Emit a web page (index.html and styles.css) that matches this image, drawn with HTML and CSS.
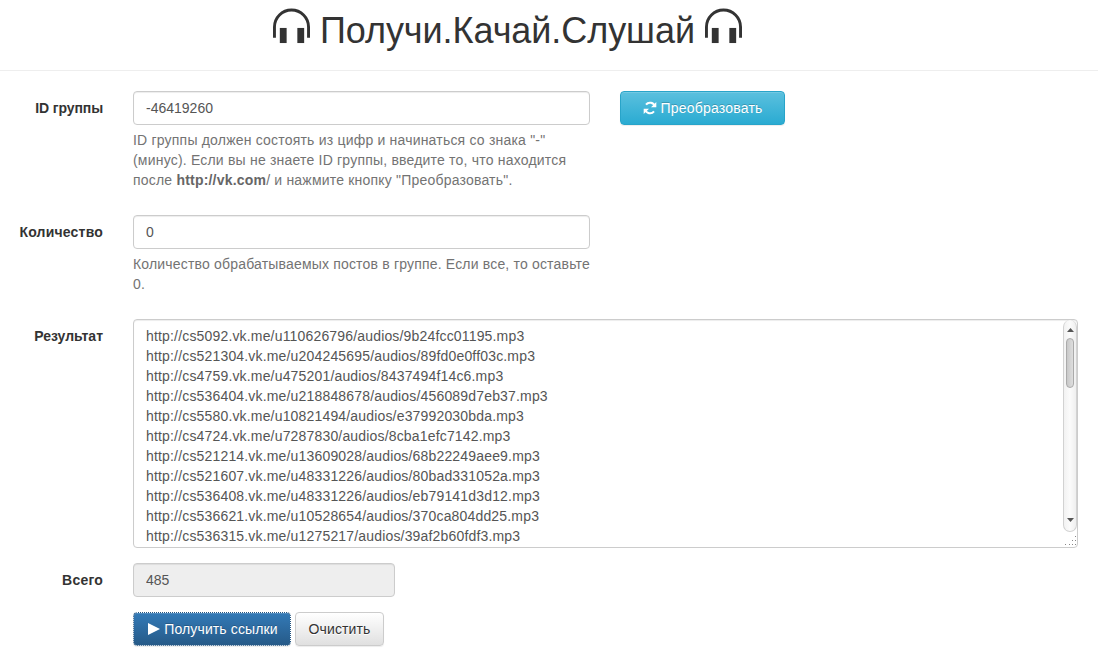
FILE: index.html
```html
<!DOCTYPE html>
<html lang="ru">
<head>
<meta charset="utf-8">
<title>Получи.Качай.Слушай</title>
<link rel="stylesheet" href="styles.css">
</head>
<body>
<header class="page-header">
  <h1 class="title">
    <svg class="phones" viewBox="0 0 38 36"><path d="M1.500 30V19a17.500 17.500 0 0 1 35 0v11" fill="none" stroke="currentColor" stroke-width="3"/><rect x="7" y="20" width="7" height="15.500" fill="currentColor"/><rect x="25" y="20" width="7" height="15.500" fill="currentColor"/></svg>
    <span>Получи.Качай.Слушай</span>
    <svg class="phones" viewBox="0 0 38 36"><path d="M1.500 30V19a17.500 17.500 0 0 1 35 0v11" fill="none" stroke="currentColor" stroke-width="3"/><rect x="7" y="20" width="7" height="15.500" fill="currentColor"/><rect x="25" y="20" width="7" height="15.500" fill="currentColor"/></svg>
  </h1>
</header>
<form class="form">
  <div class="group">
    <label class="label label-tight" for="gid">ID группы</label>
    <div class="control">
      <input class="input" id="gid" type="text" value="-46419260">
      <p class="help help-id">ID группы должен состоять из цифр и начинаться со знака "-" (минус). Если вы не знаете ID группы, введите то, что находится после <b>http://vk.com</b>/ и нажмите кнопку "Преобразовать".</p>
    </div>
    <button class="btn btn-info" type="button">
      <svg class="ico" viewBox="0 0 14 14"><path d="M11.800 5.600A5 5 0 0 0 3 3.600" fill="none" stroke="currentColor" stroke-width="2"/><path d="M13.300 1v5.300H8z" fill="currentColor"/><path d="M2.200 8.400A5 5 0 0 0 11 10.400" fill="none" stroke="currentColor" stroke-width="2"/><path d="M.7 13V7.700H6z" fill="currentColor"/></svg>
      Преобразовать
    </button>
  </div>
  <div class="group">
    <label class="label label-wide" for="cnt">Количество</label>
    <div class="control">
      <input class="input" id="cnt" type="text" value="0">
      <p class="help help-count">Количество обрабатываемых постов в группе. Если все, то оставьте 0.</p>
    </div>
  </div>
  <div class="group">
    <label class="label" for="res">Результат</label>
    <div class="result-wrap">
      <textarea class="result" id="res" spellcheck="false">http://cs5092.vk.me/u110626796/audios/9b24fcc01195.mp3
http://cs521304.vk.me/u204245695/audios/89fd0e0ff03c.mp3
http://cs4759.vk.me/u475201/audios/8437494f14c6.mp3
http://cs536404.vk.me/u218848678/audios/456089d7eb37.mp3
http://cs5580.vk.me/u10821494/audios/e37992030bda.mp3
http://cs4724.vk.me/u7287830/audios/8cba1efc7142.mp3
http://cs521214.vk.me/u13609028/audios/68b22249aee9.mp3
http://cs521607.vk.me/u48331226/audios/80bad331052a.mp3
http://cs536408.vk.me/u48331226/audios/eb79141d3d12.mp3
http://cs536621.vk.me/u10528654/audios/370ca804dd25.mp3
http://cs536315.vk.me/u1275217/audios/39af2b60fdf3.mp3</textarea>
      <div class="scrollbar">
        <svg class="arrow" viewBox="0 0 7 4"><path d="M3.500 0L7 4H0z"/></svg>
        <div class="thumb"></div>
        <svg class="arrow arrow-down" viewBox="0 0 7 4"><path d="M0 0h7L3.500 4z"/></svg>
      </div>
      <svg class="grip" viewBox="0 0 12 10"><g fill="#888"><rect x="10" width="1" height="1"/><rect x="7" y="4" width="1" height="1"/><rect x="10" y="4" width="1" height="1"/><rect y="8" width="1" height="1"/><rect x="4" y="8" width="1" height="1"/><rect x="7" y="8" width="1" height="1"/><rect x="10" y="8" width="1" height="1"/></g></svg>
    </div>
  </div>
  <div class="group">
    <label class="label label-wide" for="total">Всего</label>
    <input class="input input-total" id="total" type="text" value="485" disabled>
  </div>
  <div class="actions">
    <button class="btn btn-primary" type="button">
      <svg class="ico" viewBox="0 0 14 14"><path d="M2 1l12 6-12 6z" fill="currentColor"/></svg>
      Получить ссылки
    </button>
    <button class="btn btn-default" type="button">Очистить</button>
  </div>
</form>
</body>
</html>
```
FILE: styles.css
```css
* { box-sizing: border-box; }
html, body { height: 100%; }
body {
  margin: 0;
  overflow: hidden;
  background: #fff;
  color: #333;
  font: 14px/20px "Liberation Sans", Arial, sans-serif;
}
.page-header {
  height: 71px;
  margin-bottom: 20px;
  border-bottom: 1px solid #eee;
  padding-left: 273px;
}
.title {
  display: flex;
  align-items: flex-start;
  gap: 10px;
  margin: 0;
  padding-top: 11px;
  font-size: 36px;
  font-weight: 500;
  line-height: 40px;
  letter-spacing: -.06px;
  color: #333;
}
.phones { width: 37px; height: 36px; flex: none; margin-top: -3px; }
.form { padding-right: 20px; }
.group { display: flex; align-items: flex-start; gap: 30px; margin-bottom: 15px; }
.label {
  width: 103px;
  flex: none;
  padding-top: 7px;
  text-align: right;
  font-weight: 700;
}
.label-wide { letter-spacing: .2px; }
.label-tight { letter-spacing: -.1px; }
.control { width: 457px; flex: none; }
.input {
  display: block;
  width: 100%;
  height: 34px;
  padding: 6px 12px;
  border: 1px solid #ccc;
  border-radius: 4px;
  background: #fff;
  box-shadow: inset 0 1px 1px rgba(0,0,0,.075);
  color: #555;
  font: inherit;
}
.input-total { width: 262px; background: #eee; opacity: 1; }
.help { margin: 5px 0 10px; color: #737373; }
.help b { color: #666; }
.help-id { letter-spacing: .2px; }
.help-count { letter-spacing: .18px; }
.result-wrap { position: relative; flex: 1; }
.result {
  display: block;
  width: 100%;
  height: 229px;
  padding: 6px 12px;
  border: 1px solid #ccc;
  border-radius: 4px;
  box-shadow: inset 0 1px 1px rgba(0,0,0,.075);
  color: #555;
  font: inherit;
  letter-spacing: .17px;
  white-space: pre;
  overflow: hidden;
  resize: none;
}
.scrollbar {
  position: absolute;
  top: 1px;
  right: 1px;
  width: 14px;
  height: 212px;
  display: flex;
  flex-direction: column;
  align-items: center;
  padding-top: 8px;
  border: 1px solid #d2d2d2;
  border-width: 0 1px 1px;
  border-radius: 7px;
  background: linear-gradient(90deg, #f2f2f2, #fbfbfb 50%, #efefef);
}
.arrow { width: 7px; height: 4px; flex: none; fill: #555; }
.arrow-down { margin-top: auto; margin-bottom: 9px; }
.thumb {
  width: 8px;
  height: 50px;
  margin-top: 6px;
  border: 1px solid #aaa;
  border-radius: 4px;
  background: linear-gradient(90deg, #c8c8c8, #dedede);
}
.grip {
  position: absolute;
  right: 1px;
  bottom: 2px;
  width: 12px;
  height: 10px;
}
.actions { display: flex; gap: 4px; padding-left: 133px; }
.btn {
  display: inline-flex;
  align-items: center;
  justify-content: center;
  gap: 4px;
  height: 34px;
  padding: 6px 12px;
  border: 1px solid transparent;
  border-radius: 4px;
  font: inherit;
  white-space: nowrap;
  letter-spacing: .12px;
  box-shadow: inset 0 1px 0 rgba(255,255,255,.15), 0 1px 1px rgba(0,0,0,.075);
}
.ico { width: 14px; height: 14px; flex: none; }
.btn-info {
  width: 165px;
  letter-spacing: .2px;
  color: #fff;
  text-shadow: 0 -1px 0 rgba(0,0,0,.2);
  background: linear-gradient(#5bc0de, #2aabd2);
  border-color: #28a4c9;
}
.btn-primary {
  width: 158px;
  color: #fff;
  text-shadow: 0 -1px 0 rgba(0,0,0,.2);
  background: linear-gradient(#337ab7, #265a88);
  border-color: #245580;
  outline: 1px dotted #fff;
  outline-offset: -1px;
}
.btn-default {
  width: 89px;
  color: #333;
  text-shadow: 0 1px 0 #fff;
  background: linear-gradient(#fff, #e0e0e0);
  border-color: #ccc;
}
```
